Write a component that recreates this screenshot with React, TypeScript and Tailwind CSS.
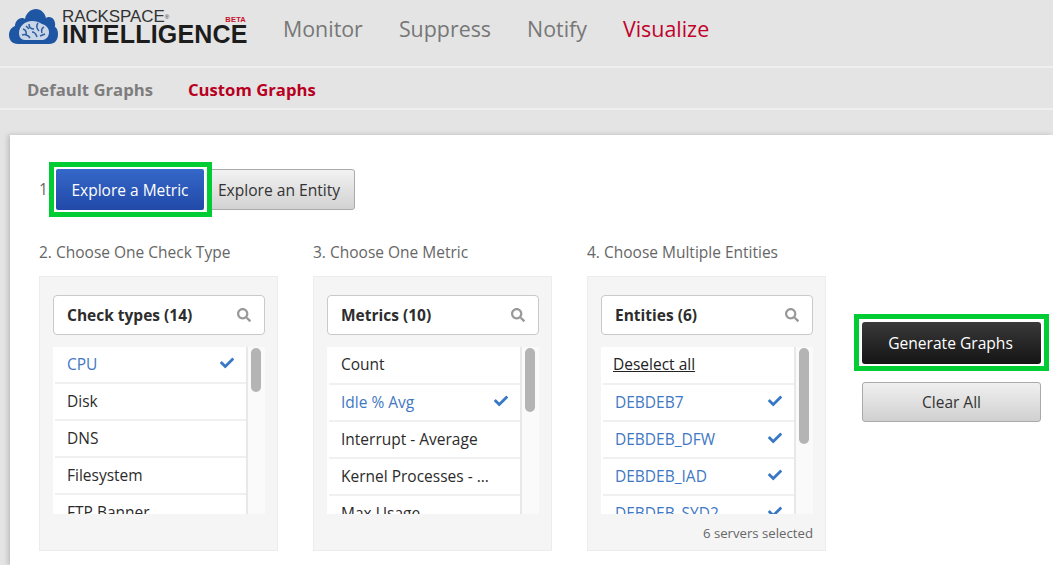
import { FaCheck, FaSearch } from 'react-icons/fa';

type Row = { label: string; checked?: boolean; link?: boolean };

type Column = {
    title: string;
    search: string;
    thumb: string;
    firstRow: string;
    rows: Row[];
    footer?: string;
};

const columns: Column[] = [
    {
        title: '2. Choose One Check Type',
        search: 'Check types (14)',
        thumb: 'h-[44px]',
        firstRow: 'h-[35px]',
        rows: [{ label: 'CPU', checked: true }, { label: 'Disk' }, { label: 'DNS' }, { label: 'Filesystem' }, { label: 'FTP Banner' }],
    },
    {
        title: '3. Choose One Metric',
        search: 'Metrics (10)',
        thumb: 'h-[64px]',
        firstRow: 'h-[36px]',
        rows: [
            { label: 'Count' },
            { label: 'Idle % Avg', checked: true },
            { label: 'Interrupt - Average' },
            { label: 'Kernel Processes - ...' },
            { label: 'Max Usage' },
        ],
    },
    {
        title: '4. Choose Multiple Entities',
        search: 'Entities (6)',
        thumb: 'h-[96px]',
        firstRow: 'h-[36px]',
        footer: '6 servers selected',
        rows: [
            { label: 'Deselect all', link: true },
            { label: 'DEBDEB7', checked: true },
            { label: 'DEBDEB_DFW', checked: true },
            { label: 'DEBDEB_IAD', checked: true },
            { label: 'DEBDEB_SYD2', checked: true },
        ],
    },
];

function Logo() {
    return (
        <svg width="49" height="36" viewBox="0 0 49 36" className="shrink-0">
            <path
                d="M9 36C3 36 0 32 0 27c0-5 3-8 6-9 0-4 3-8 7-8 1 0 2 0 3 1 1-6 6-10 11-10 5 0 9 4 10 9 1-1 2-1 3-1 4 0 7 4 6 10 2 1 3 4 3 7 0 6-3 10-9 10z"
                fill="#1f56a3"
            />
            <path d="M10 25c0-7 6-12 13-12 4 0 7 1 10 3 4 1 7 4 7 8 0 4-2 7-6 8H16c-4 0-6-3-6-7z" fill="#c9d6e8" />
            <path
                d="M14 21c3 1 4 3 3 7M20 16c0 3 2 5 5 5M29 15c-2 3-1 6 1 8M35 19c-2 1-3 3-2 6M13 27c3-1 6 0 8 3M23 24c2 0 4 2 5 5M17 18l3 3M31 28l5-2"
                fill="none"
                stroke="#2f5f9f"
                strokeWidth="1.5"
            />
        </svg>
    );
}

function ListRow({ row, first }: { row: Row; first?: string }) {
    return (
        <div
            className={`flex shrink-0 items-center justify-between pr-[12px] ${
                first ? `${first} ${row.link ? 'pl-[12px]' : 'pl-[14px]'}` : 'ml-[2px] h-[37px] border-t-2 border-[#f0f0f0] pl-[12px]'
            }`}
        >
            <span className={`text-[15.5px] ${row.link ? 'text-[#222] underline' : row.checked ? 'text-[#3f78c4]' : 'text-[#2b2b2b]'}`}>{row.label}</span>
            {row.checked && <FaCheck className="mb-[4px] h-[14px] w-[14px] text-[#3878c5]" />}
        </div>
    );
}

function ChooserColumn({ column }: { column: Column }) {
    return (
        <div className="w-[239px]">
            <div className="mb-[14px] h-[20px] text-[15.5px] leading-[20px] text-[#666]">{column.title}</div>
            <div className="h-[275px] border border-[#ececec] bg-[#f5f5f5] pt-[18px] pr-[12px] pl-[13px]">
                <div className="flex h-[40px] items-center justify-between rounded-[4px] border border-[#c9c9c9] bg-white pr-[13px] pl-[13px]">
                    <span className="pt-[2px] text-[15.5px] font-bold text-[#2d2d2d]">{column.search}</span>
                    <FaSearch className="h-[14px] w-[14px] text-[#999]" />
                </div>
                <div className="mt-[12px] flex h-[167px] overflow-hidden bg-[#fafafa]">
                    <div className="flex w-[195px] flex-col overflow-hidden border-r-2 border-[#e8e8e8] bg-white">
                        {column.rows.map((row, i) => (
                            <ListRow key={row.label} row={row} first={i === 0 ? column.firstRow : undefined} />
                        ))}
                    </div>
                    <div className="pt-[1px] pl-[3px]">
                        <div className={`w-[10px] rounded-[5px] bg-[#b4b4b4] ${column.thumb}`} />
                    </div>
                </div>
                {column.footer && <div className="mt-[10px] text-right text-[13.2px] leading-[18px] text-[#666]">{column.footer}</div>}
            </div>
        </div>
    );
}

export default function App() {
    return (
        <div className="h-[565px] w-[1053px] overflow-hidden bg-[#e4e4e4] font-['Open_Sans',sans-serif]">
            <header className="flex h-[68px] items-center border-b-2 border-[#efefef] pl-[9px]">
                <div className="mb-[14px] flex items-start">
                    <Logo />
                    <div className="relative ml-[4px] w-[190px] pt-[1px]">
                        <div className="h-[15px] font-['Liberation_Sans',sans-serif] text-[17px] leading-[15px] tracking-[-0.1px] text-[#333]">
                            RACKSPACE<sup className="text-[6px]">®</sup>
                        </div>
                        <div className="font-['Liberation_Sans',sans-serif] text-[25px] leading-[20px] font-bold tracking-[0.2px] text-[#1c1c1c]">INTELLIGENCE</div>
                        <span className="absolute top-[8px] right-[6px] font-['Liberation_Sans',sans-serif] text-[7.5px] leading-[8px] font-bold tracking-[0.2px] text-[#c8102e]">BETA</span>
                    </div>
                </div>
                <nav className="mb-[8px] ml-[31px] flex gap-[36px] text-[21.4px] text-[#777]">
                    <span>Monitor</span>
                    <span>Suppress</span>
                    <span>Notify</span>
                    <span className="text-[#c0022a]">Visualize</span>
                </nav>
            </header>
            <div className="flex h-[42px] items-center gap-[35px] border-b-2 border-[#efefef] pt-[3px] pl-[27px] text-[16.7px] font-bold text-[#7d7d7d]">
                <span>Default Graphs</span>
                <span className="text-[#b8001f]">Custom Graphs</span>
            </div>
            <main className="mt-[25px] ml-[10px] h-[430px] bg-white pt-[34px] pl-[29px] shadow-[-2px_0_5px_rgba(0,0,0,0.18)]">
                <div className="flex h-[41px] items-center">
                    <span className="w-[17px] text-[15.5px] text-[#666]">1.</span>
                    <div className="relative z-10 -my-[7px] -mr-[8px] -ml-[7px] border-[5px] border-[#00cc33] bg-white py-[2px] pr-[3px] pl-[2px]">
                        <button className="block h-[41px] w-[148px] rounded-[2px] bg-gradient-to-b from-[#3568c9] to-[#2149a8] pt-[2px] text-[15.5px] text-white">
                            Explore a Metric
                        </button>
                    </div>
                    <button className="ml-[1px] h-[41px] w-[150px] rounded-r-[3px] border border-[#aaa] bg-gradient-to-b from-[#f2f2f2] to-[#d2d2d2] pt-[2px] pr-[2px] text-[15.6px] text-[#333]">
                        Explore an Entity
                    </button>
                </div>
                <div className="mt-[32px] flex">
                    <div className="flex gap-[35px]">
                        {columns.map((column) => (
                            <ChooserColumn key={column.title} column={column} />
                        ))}
                    </div>
                    <div className="mt-[72px] ml-[36px] flex w-[179px] flex-col">
                        <div className="-mx-[8px] border-[5px] border-[#00cc33] pt-[3px] pr-[3px] pb-[2px] pl-[3px]">
                            <button className="block h-[42px] w-[179px] rounded-[3px] bg-gradient-to-b from-[#3a3a3a] to-[#151515] pt-[2px] pr-[2px] text-[15.6px] text-white">
                                Generate Graphs
                            </button>
                        </div>
                        <button className="mt-[11px] h-[40px] rounded-[3px] border border-[#aaa] bg-gradient-to-b from-[#f0f0f0] to-[#d0d0d0] pt-[2px] text-[15.5px] text-[#333]">
                            Clear All
                        </button>
                    </div>
                </div>
            </main>
        </div>
    );
}
